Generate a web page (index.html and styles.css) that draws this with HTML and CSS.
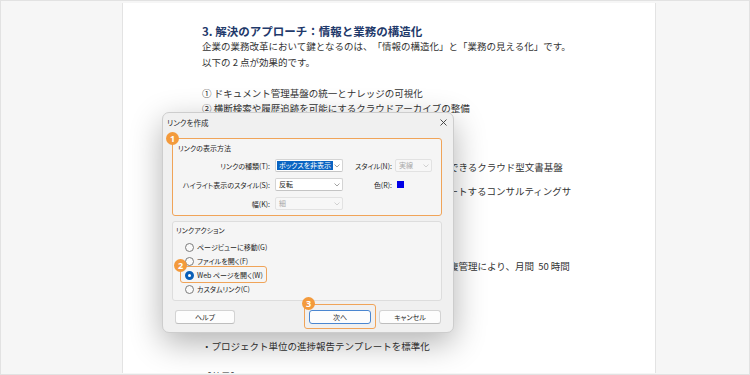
FILE: index.html
```html
<!DOCTYPE html>
<html lang="ja">

<head>
    <meta charset="UTF-8">
    <meta name="viewport" content="width=device-width, initial-scale=1.0">
    <title>リンクを作成</title>
    <link rel="stylesheet" href="styles.css">
</head>

<body>
    <div class="frame">
        <div class="page">
            <article class="doc">
                <h2 class="doc-heading">3. 解決のアプローチ：情報と業務の構造化</h2>
                <p class="doc-lead">企業の業務改革において鍵となるのは、「情報の構造化」と「業務の見える化」です。<br>以下の 2 点が効果的です。</p>
                <p class="doc-points">① ドキュメント管理基盤の統一とナレッジの可視化<br>② 横断検索や履歴追跡を可能にするクラウドアーカイブの整備</p>

                <h3 class="doc-sub sub-solution">【ソリューション】</h3>
                <ul class="doc-list list-solution">
                    <li>・場所や端末を問わず常に最新の文書を安全に閲覧・共有できるクラウド型文書基盤</li>
                    <li>・文書システムの導入から社内への定着まで一貫してサポートするコンサルティングサ<br>ービス</li>
                </ul>

                <h3 class="doc-sub sub-case">【導入事例】</h3>
                <ul class="doc-list list-case">
                    <li>・書類の電子化、文書の一元管理、承認作業の自動化、重複管理により、月間&nbsp; 50 時間<br>の作業削減を実現</li>
                    <li>・承認フローを電子化</li>
                    <li>・プロジェクト単位の進捗報告テンプレートを標準化</li>
                </ul>

                <h3 class="doc-sub sub-effect">【効果】</h3>
            </article>

            <div class="dialog" role="dialog" aria-label="リンクを作成">
                <div class="dlg-titlebar">
                    <span class="dlg-title">リンクを作成</span>
                    <svg class="dlg-close" viewBox="0 0 7 7" aria-hidden="true">
                        <path d="M0.5 0.5 L6.5 6.5 M6.5 0.5 L0.5 6.5" />
                    </svg>
                </div>

                <div class="dlg-body">
                    <section class="group group-look">
                        <span class="badge badge-1">1</span>
                        <div class="group-label">リンクの表示方法</div>
                        <div class="field-row">
                            <span class="field-label">リンクの種類(T):</span>
                            <span class="select sel-main"><span class="sel-text is-highlight">ボックスを非表示</span><svg class="chev" viewBox="0 0 6 4"><path d="M0.5 0.5 L3 3 L5.5 0.5" /></svg></span>
                            <span class="field-label2">スタイル(N):</span>
                            <span class="select sel-small is-disabled"><span class="sel-text">実線</span><svg class="chev" viewBox="0 0 6 4"><path d="M0.5 0.5 L3 3 L5.5 0.5" /></svg></span>
                        </div>
                        <div class="field-row">
                            <span class="field-label">ハイライト表示のスタイル(S):</span>
                            <span class="select sel-main"><span class="sel-text">反転</span><svg class="chev" viewBox="0 0 6 4"><path d="M0.5 0.5 L3 3 L5.5 0.5" /></svg></span>
                            <span class="field-label2">色(R):</span>
                            <span class="swatch"></span>
                        </div>
                        <div class="field-row">
                            <span class="field-label">幅(K):</span>
                            <span class="select sel-main is-disabled"><span class="sel-text">細</span><svg class="chev" viewBox="0 0 6 4"><path d="M0.5 0.5 L3 3 L5.5 0.5" /></svg></span>
                        </div>
                    </section>

                    <section class="group group-action">
                        <div class="group-label">リンクアクション</div>
                        <div class="radio-list">
                            <label class="radio"><span class="radio-dot"></span>ページビューに移動(G)</label>
                            <label class="radio"><span class="radio-dot"></span>ファイルを開く(F)</label>
                            <label class="radio is-checked callout-radio"><span class="badge badge-2">2</span><span class="radio-dot"></span>Web ページを開く(W)</label>
                            <label class="radio"><span class="radio-dot"></span>カスタムリンク(C)</label>
                        </div>
                    </section>

                    <div class="dlg-footer">
                        <button class="btn btn-help" type="button">ヘルプ</button>
                        <div class="btn-pair">
                            <span class="callout-btn">
                                <span class="badge badge-3">3</span>
                                <button class="btn btn-default" type="button">次へ</button>
                            </span>
                            <button class="btn" type="button">キャンセル</button>
                        </div>
                    </div>
                </div>
            </div>
        </div>
    </div>
</body>

</html>
```

FILE: styles.css
```css
body {
    margin: 0;
    width: 750px;
    height: 375px;
    overflow: hidden;
    font-family: "Noto Sans CJK JP", "Noto Sans", sans-serif;
    color: #333;
    text-spacing-trim: space-all;
}

.frame {
    display: flex;
    box-sizing: border-box;
    height: 375px;
    padding: 2px 93px 1px 121px;
    border: 1px solid #e2e2e2;
    background-color: #f6f6f6;
}

.page {
    position: relative;
    flex: none;
    width: 532px;
    height: 370px;
    overflow: hidden;
    background-color: #fff;
    border-left: 1px solid #e3e3e3;
    border-right: 1px solid #e3e3e3;
}

/* document */
.doc {
    width: 378px;
    padding: 21px 0 0 79px;
    font-size: 9.5px;
    line-height: 15.5px;
    color: #333;
}

.doc p,
.doc h2,
.doc h3,
.doc ul {
    margin: 0;
    padding: 0;
}

.doc ul {
    list-style: none;
}

.doc-heading {
    font-size: 11.5px;
    line-height: 15px;
    font-weight: 700;
    color: #1f3a6b;
}

.doc-sub {
    font-size: 9.5px;
    font-weight: 400;
}

.doc .doc-points {
    margin-top: 15.5px;
}

.doc .sub-solution {
    margin-top: 16px;
}

.doc .list-solution {
    margin-top: 12px;
}

.list-solution li+li {
    margin-top: 8.5px;
}

.doc .sub-case {
    margin-top: 12px;
}

.doc .list-case {
    margin-top: 16.5px;
}

.list-case li+li {
    margin-top: 16.5px;
}

.doc .sub-effect {
    margin-top: 14.5px;
}

/* dialog */
.dialog {
    position: absolute;
    left: 39px;
    top: 109px;
    width: 292px;
    height: 221px;
    box-sizing: border-box;
    display: flex;
    flex-direction: column;
    background-color: #f0f0f0;
    border: 1px solid #cdcdcd;
    border-radius: 7px;
    box-shadow: 0 10px 32px rgba(0, 0, 0, 0.3);
    font-size: 7px;
    line-height: 10px;
    color: #1e1e1e;
    font-feature-settings: "palt";
}

.dlg-titlebar {
    display: flex;
    align-items: center;
    justify-content: space-between;
    height: 19px;
    padding: 0 6px 0 4px;
}

.dlg-title {
    font-size: 7.5px;
}

.dlg-close {
    width: 7px;
    height: 7px;
    stroke: #3a3a3a;
    stroke-width: 0.9;
    fill: none;
}

.dlg-body {
    padding: 6px 11px 0 9px;
}

.group {
    position: relative;
    box-sizing: border-box;
    border: 1px solid #dddddd;
    border-radius: 3px;
    background-color: #f5f5f5;
}

.group-look {
    height: 78px;
    padding-top: 4px;
    border-color: #f0a459;
}

.group-look .group-label {
    padding-left: 5px;
}

.group-action {
    height: 80px;
    margin-top: 5px;
    padding-top: 3px;
}

.group-action .group-label {
    padding-left: 3px;
}

.field-row {
    display: flex;
    align-items: center;
    height: 13px;
    margin-top: 6px;
}

.field-label {
    flex: none;
    width: 97px;
    margin-right: 5px;
    text-align: right;
    white-space: nowrap;
}

.field-label2 {
    flex: none;
    width: 44px;
    margin-left: 5px;
    text-align: right;
    white-space: nowrap;
}

.select {
    flex: none;
    box-sizing: border-box;
    display: flex;
    align-items: center;
    justify-content: space-between;
    height: 13px;
    padding: 0 2px 0 1px;
    background-color: #fff;
    border: 1px solid #d4d4d4;
    border-bottom-color: #c4c4c4;
    border-radius: 2px;
}

.sel-main {
    width: 68px;
}

.sel-small {
    width: 37px;
    margin-left: 3px;
}

.sel-text {
    padding: 0 2px;
    line-height: 9px;
    white-space: nowrap;
}

.sel-text.is-highlight {
    background-color: #0a64c2;
    color: #fff;
}

.chev {
    width: 6px;
    height: 4px;
    stroke: #8c8c8c;
    stroke-width: 0.8;
    fill: none;
}

.select.is-disabled {
    background-color: #f7f7f7;
    border-color: #e2e2e2;
    color: #a9a9a9;
}

.select.is-disabled .chev {
    stroke: #c6c6c6;
}

.swatch {
    width: 7px;
    height: 7px;
    margin-left: 5px;
    background-color: #0000e6;
}

.radio-list {
    margin-top: 5px;
    padding-left: 12px;
}

.radio {
    display: flex;
    align-items: center;
    height: 14px;
    white-space: nowrap;
}

.radio-dot {
    flex: none;
    box-sizing: border-box;
    width: 9px;
    height: 9px;
    margin-right: 3px;
    border: 1px solid #7b7b7b;
    border-radius: 50%;
    background-color: #fafafa;
}

.radio.is-checked .radio-dot {
    border: 3px solid #0a5fb8;
    background-color: #fff;
}

/* orange callouts */
.callout-radio {
    position: relative;
    width: fit-content;
    padding: 1px 3px 0 4px;
    margin: -2px 0 -1px -5px;
    border: 1px solid #f0a459;
    border-radius: 3px;
}

.callout-btn {
    position: relative;
    display: flex;
    padding: 5px 4px 4px 4px;
    margin: -6px -5px -5px -5px;
    border: 1px solid #f0a459;
    border-radius: 3px;
}

.badge {
    position: absolute;
    z-index: 2;
    width: 13px;
    height: 13px;
    border-radius: 50%;
    background-color: #f39a3c;
    color: #fff;
    font-family: "Noto Sans", sans-serif;
    font-size: 9px;
    font-weight: 700;
    line-height: 13px;
    text-align: center;
}

.badge-1 {
    left: -7px;
    top: -7px;
}

.badge-2 {
    left: -7px;
    top: -8px;
}

.badge-3 {
    left: -3px;
    top: -8px;
}

.dlg-footer {
    display: flex;
    justify-content: space-between;
    margin-top: 9px;
    padding: 0 1px 0 3px;
}

.btn-pair {
    display: flex;
    gap: 8px;
}

.btn {
    box-sizing: border-box;
    width: 62px;
    height: 14px;
    padding: 0;
    background-color: #fdfdfd;
    border: 1px solid #d3d3d3;
    border-bottom-color: #bebebe;
    border-radius: 3px;
    font-family: inherit;
    font-size: 7px;
    line-height: 12px;
    color: #1e1e1e;
    font-feature-settings: "palt";
}

.btn-help {
    width: 60px;
}

.btn-default {
    border-color: #4a86d0;
}
```
